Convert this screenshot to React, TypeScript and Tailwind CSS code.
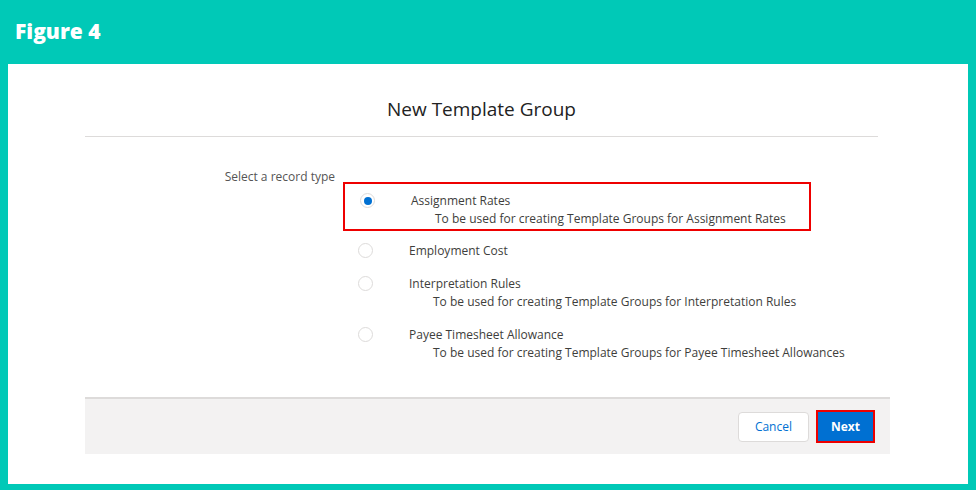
export default function App() {
  const items = [
    { t: "Assignment Rates", d: "To be used for creating Template Groups for Assignment Rates", sel: true, cls: "border-2 border-[#e00] h-[49px] pt-[8px] mt-[15px] mb-[8px]" },
    { t: "Employment Cost", d: "", cls: "h-[33px] pt-[3px]" },
    { t: "Interpretation Rules", d: "To be used for creating Template Groups for Interpretation Rules", cls: "h-[51px] pt-[3px]" },
    { t: "Payee Timesheet Allowance", d: "To be used for creating Template Groups for Payee Timesheet Allowances", cls: "h-[51px] pt-[3px]" },
  ];
  return (
    <div className="w-[976px] h-[490px] bg-[#00c9b7] flex flex-col" style={{ fontFamily: '"Open Sans", sans-serif' }}>
      <div className="h-[64px] shrink-0 flex items-center pl-[15px] text-white font-extrabold text-[21px]" style={{ fontFamily: '"Open Sans", sans-serif' }}>Figure 4</div>
      <div className="mx-[8px] mb-[6px] flex-1 bg-white flex flex-col">
        <div className="ml-[77px] w-[793px] flex flex-col">
          <div className="h-[73px] border-b border-[#dddbda] flex items-center justify-center pt-[18px] text-[19px] text-[#222]">New Template Group</div>
          <div className="flex mt-[30px] text-[12px] text-[#3e3e3c]">
            <div className="w-[258px] text-right pr-[8px] text-[#555] pt-[1px]">Select a record type</div>
            <div className="flex flex-col">
              {items.map((it, i) => (
                <div key={i} className={`relative w-[468px] flex ${it.cls}`}>
                  <div className="w-[15px] h-[15px] rounded-full border border-[#dddbda] flex items-center justify-center ml-[15px] mt-[1px] shrink-0">
                    {it.sel && <div className="w-[8px] h-[8px] rounded-full bg-[#0070d2]" />}
                  </div>
                  <div className="ml-[36px] flex flex-col leading-[18px]">
                    <div>{it.t}</div>
                    {it.d && <div className="ml-[24px] whitespace-nowrap">{it.d}</div>}
                  </div>
                </div>
              ))}
            </div>
          </div>
        </div>
        <div className="mt-auto mb-[30px] ml-[77px] w-[805px] h-[57px] bg-[#f3f2f2] border-t-2 border-[#dddbda] flex items-center justify-end gap-[7px] pr-[15px]">
          <button className="h-[30px] px-[16px] bg-white border border-[#dddbda] rounded-[4px] text-[#0070d2] text-[12px]">Cancel</button>
          <button className="h-[33px] w-[59px] bg-[#0070d2] border-2 border-[#e00] text-white text-[12px] font-bold">Next</button>
        </div>
      </div>
    </div>
  );
}
